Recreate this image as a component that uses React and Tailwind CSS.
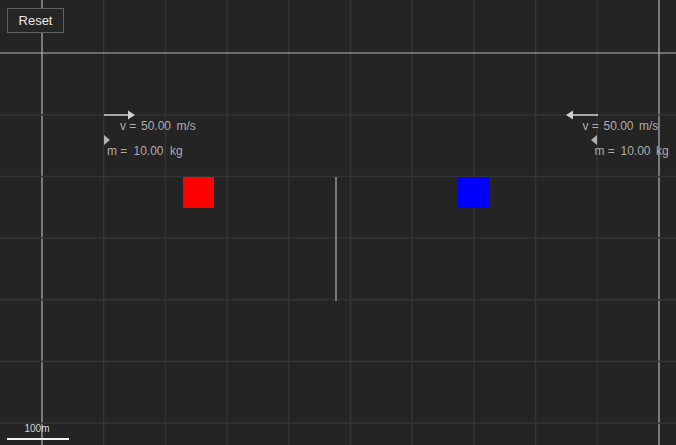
import React from "react";

const S = 61.7;
const xs = Array.from({ length: 11 }, (_, i) => 42 + S * i);
const ys = Array.from({ length: 7 }, (_, i) => 53 + S * i);

export default function App() {
  return (
    <div className="relative w-[676px] h-[445px] bg-[#242424] overflow-hidden font-['Liberation_Sans',Arial,sans-serif]">
      <svg className="absolute inset-0" width="676" height="445" viewBox="0 0 676 445">
        {xs.map((x, i) => (
          <line key={"v" + i} x1={x} y1="0" x2={x} y2="445" stroke={i === 0 || i === 10 ? "#b4b4b4" : "#343434"} strokeWidth={i === 0 || i === 10 ? 1.2 : 1.5} />
        ))}
        {ys.map((y, i) => (
          <line key={"h" + i} x1="0" y1={y} x2="676" y2={y} stroke={i === 0 ? "#b4b4b4" : "#343434"} strokeWidth={i === 0 ? 1.2 : 1.5} />
        ))}
        {/* wall */}
        <rect x="335" y="177" width="2" height="124" fill="#7a7a7a" />
        {/* boxes */}
        <rect x="183" y="177" width="31" height="31" fill="#ff0000" />
        <rect x="458" y="177" width="31" height="31" fill="#0000ff" />
        {/* left arrows */}
        <line x1="104" y1="115" x2="130" y2="115" stroke="#d0d0d0" strokeWidth="1.5" />
        <polygon points="135,115 128,110.5 128,119.5" fill="#d0d0d0" />
        <polygon points="110,140 104,135 104,145" fill="#b0b0b0" />
        {/* right arrows */}
        <line x1="572" y1="115" x2="598" y2="115" stroke="#d0d0d0" strokeWidth="1.5" />
        <polygon points="566,115 573,110.5 573,119.5" fill="#d0d0d0" />
        <polygon points="591,140 597,135 597,145" fill="#b0b0b0" />
        <g fill="#adadad" fontSize="12">
          <text y="130">
            <tspan x="120">v =</tspan>
            <tspan x="141">50.00</tspan>
            <tspan x="176.5">m/s</tspan>
          </text>
          <text y="155">
            <tspan x="107">m =</tspan>
            <tspan x="133.5">10.00</tspan>
            <tspan x="170">kg</tspan>
          </text>
          <text y="130">
            <tspan x="582.5">v =</tspan>
            <tspan x="603.5">50.00</tspan>
            <tspan x="639">m/s</tspan>
          </text>
          <text y="155">
            <tspan x="594.5">m =</tspan>
            <tspan x="620.5">10.00</tspan>
            <tspan x="656">kg</tspan>
          </text>
        </g>
        <text x="37" y="432" fill="#d8d8d8" fontSize="10" textAnchor="middle">100m</text>
        <rect x="7" y="438" width="62" height="2" fill="#f0f0f0" />
      </svg>
      <button className="absolute left-[7px] top-[8px] w-[57px] h-[25px] border border-[#606060] bg-[#262626] text-[#e8e8e8] text-[13px] leading-none flex items-center justify-center">
        Reset
      </button>
    </div>
  );
}
